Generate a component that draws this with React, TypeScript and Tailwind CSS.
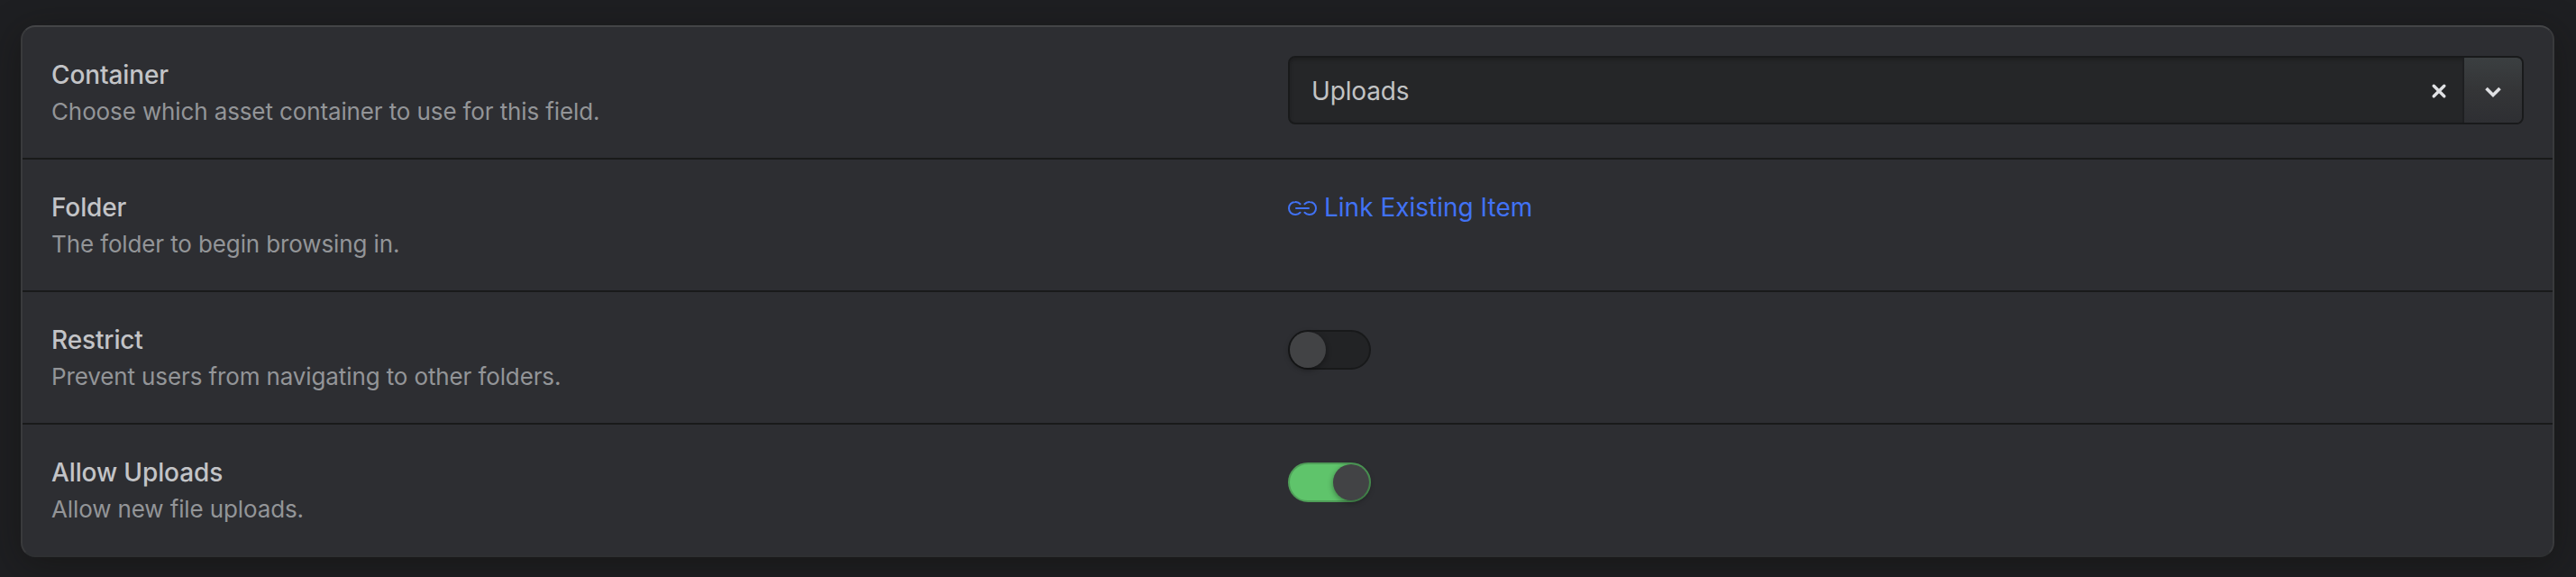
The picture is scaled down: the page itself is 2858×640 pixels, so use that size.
import type { ReactNode } from "react";

function Toggle({ on = false }: { on?: boolean }) {
  return (
    <button
      role="switch"
      aria-checked={on}
      className={
        on
          ? "mt-[10px] flex h-11 w-[92px] items-center justify-end rounded-full border-2 border-[#4f9e58] bg-[#5fc46b]"
          : "mt-[10px] flex h-11 w-[92px] items-center rounded-full border-2 border-[#18191a] bg-[#222325]"
      }
    >
      <span className="size-10 rounded-full bg-[#424345] shadow-[0_2px_6px_rgba(0,0,0,0.4)]" />
    </button>
  );
}

function ContainerSelect() {
  return (
    <div className="flex h-[76px] rounded-lg border-2 border-[#191a1b] bg-[#252628] shadow-[inset_0_2px_4px_rgba(0,0,0,0.25)]">
      <div className="flex flex-1 items-center justify-between pl-6 pr-4">
        <span className="pt-0.5 text-[28px] leading-none tracking-[-0.15px] text-[#c2c3c4]">Uploads</span>
        <svg className="mt-[2px] size-5" viewBox="0 0 20 20" fill="none" stroke="#dfe0e3" strokeWidth="3.4" strokeLinecap="round">
          <path d="M4.200 4.200 15.800 15.800M15.800 4.200 4.200 15.800" />
        </svg>
      </div>
      <div className="flex w-[66px] items-center justify-center rounded-r-md border-l-2 border-[#1e1f21] bg-linear-to-b from-[#3b3f41] via-[#343537] to-[#2e2f33]">
        <svg className="mt-1 h-5 w-6" viewBox="0 0 24 20" fill="none" stroke="#dfe0e3" strokeWidth="3.6">
          <path d="m4.500 6 7.500 7.500L19.500 6" />
        </svg>
      </div>
    </div>
  );
}

function LinkExisting() {
  return (
    <a className="mt-px flex items-center text-[28px] leading-[40px] text-[#4172f5]">
      <svg className="mr-2 mt-0.5 h-4 w-8" viewBox="0 0 32 16" fill="none" stroke="currentColor" strokeWidth="2" strokeLinecap="round">
        <path d="M13.500 12.800A7 6.600 0 0 1 8 15C4 15 1 12 1 8s3-7 7-7a7 6.600 0 0 1 5.500 2.200M18.500 3.200A7 6.600 0 0 1 24 1c4 0 7 3 7 7s-3 7-7 7a7 6.600 0 0 1-5.500-2.200M9 8h14" />
      </svg>
      Link Existing Item
    </a>
  );
}

function Field({ label, help, children }: { label: string; help: string; children: ReactNode }) {
  return (
    <div className="grid h-[147px] grid-cols-2 border-b-2 border-[#191a1a] pl-[33px] pr-8 pt-8 last:h-[145px] last:border-b-0">
      <div className="-ml-px">
        <div className="text-[28px] font-medium leading-[42px] tracking-[-0.12px] text-[#c3c4c7]">{label}</div>
        <div className="text-[26px] leading-[40px] tracking-[-0.12px] text-[#939598]">{help}</div>
      </div>
      <div>{children}</div>
    </div>
  );
}

export default function App() {
  return (
    <main className="h-[640px] w-[2858px] overflow-hidden bg-[#1e1f22] pl-[23px] pr-6 pt-7 font-[Inter,sans-serif]">
      <section className="h-[590px] rounded-2xl border-2 border-x-[#393a3c] border-t-[#444547] border-b-[#2e3032] bg-[#2d2e32] shadow-[0_8px_40px_rgba(18,16,12,0.45)]">
        <Field label="Container" help="Choose which asset container to use for this field.">
          <ContainerSelect />
        </Field>
        <Field label="Folder" help="The folder to begin browsing in.">
          <LinkExisting />
        </Field>
        <Field label="Restrict" help="Prevent users from navigating to other folders.">
          <Toggle />
        </Field>
        <Field label="Allow Uploads" help="Allow new file uploads.">
          <Toggle on />
        </Field>
      </section>
    </main>
  );
}
